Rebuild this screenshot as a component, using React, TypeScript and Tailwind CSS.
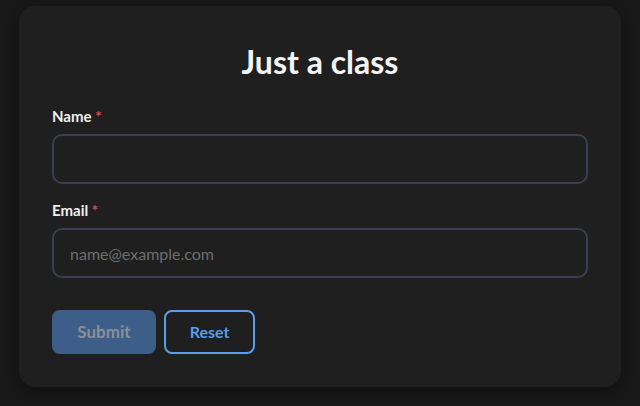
import React from "react";

export default function App() {
  return (
    <div
      className="w-[640px] h-[406px] bg-[#181818] pt-[6px] pl-[19px]"
      style={{ fontFamily: "Lato, 'Open Sans', sans-serif" }}
    >
      <div className="w-[602px] h-[381px] bg-[#1f1f1f] rounded-[16px] shadow-[0_4px_12px_rgba(0,0,0,0.35)] px-[33px] pt-[36px]">
        <h1 className="text-center text-[32px] leading-[40px] font-bold text-[#f3f4f6]">Just a class</h1>
        <div className="mt-[25px] flex flex-col">
          <label className="text-[15px] leading-[18px] font-bold text-[#f0f0f0]">
            Name <span className="text-[#e5484d]">*</span>
          </label>
          <input
            className="mt-[9px] h-[50px] w-full rounded-[10px] border-2 border-[#3a3f4f] bg-[#1f1f1f] px-[16px] text-[16px] text-[#e5e5e5] outline-none"
          />
          <label className="mt-[17px] text-[15px] leading-[18px] font-bold text-[#f0f0f0]">
            Email <span className="text-[#e5484d]">*</span>
          </label>
          <input
            placeholder="name@example.com"
            className="mt-[9px] h-[50px] w-full rounded-[10px] border-2 border-[#3a3f4f] bg-[#1f1f1f] px-[16px] text-[16px] text-[#e5e5e5] placeholder:text-[#6e6e6e] outline-none"
          />
          <div className="mt-[32px] flex gap-[8px]">
            <button className="h-[44px] w-[104px] rounded-[8px] bg-[#3e5e8a] text-[17px] font-bold text-[#8b8f96]">
              Submit
            </button>
            <button className="h-[44px] w-[91px] rounded-[8px] border-2 border-[#5b9de8] text-[16px] font-bold text-[#5b9de8]">
              Reset
            </button>
          </div>
        </div>
      </div>
    </div>
  );
}
